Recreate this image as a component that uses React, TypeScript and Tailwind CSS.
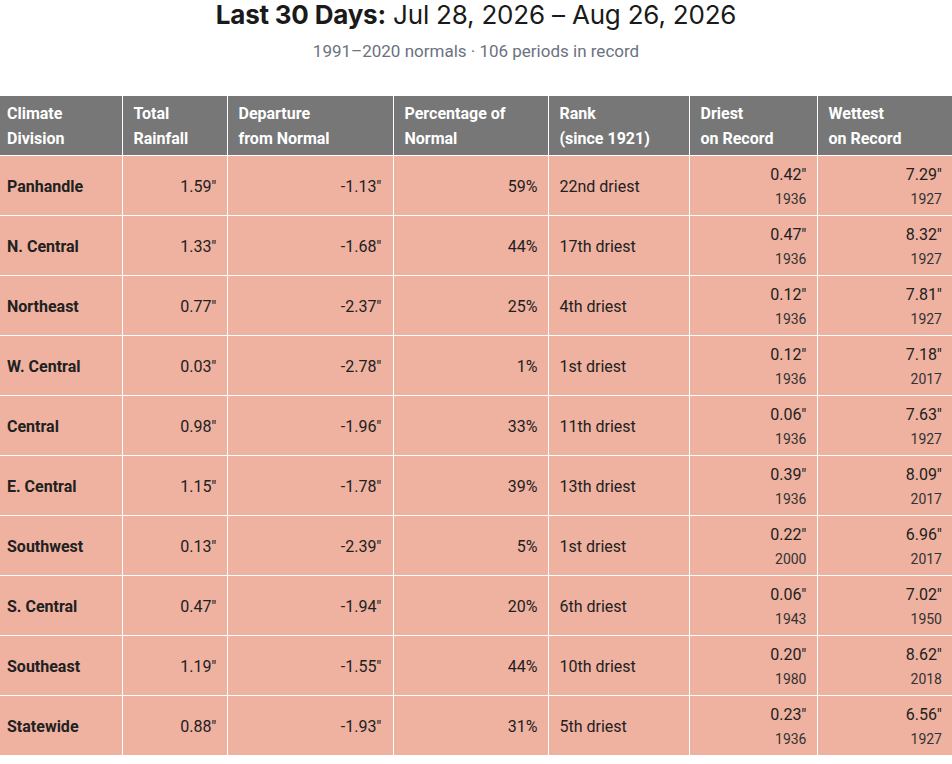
const rows = [
  { name: "Panhandle", total: '1.59"', dep: '-1.13"', pct: "59%", rank: "22nd driest", dry: '0.42"', dryYr: "1936", wet: '7.29"', wetYr: "1927" },
  { name: "N. Central", total: '1.33"', dep: '-1.68"', pct: "44%", rank: "17th driest", dry: '0.47"', dryYr: "1936", wet: '8.32"', wetYr: "1927" },
  { name: "Northeast", total: '0.77"', dep: '-2.37"', pct: "25%", rank: "4th driest", dry: '0.12"', dryYr: "1936", wet: '7.81"', wetYr: "1927" },
  { name: "W. Central", total: '0.03"', dep: '-2.78"', pct: "1%", rank: "1st driest", dry: '0.12"', dryYr: "1936", wet: '7.18"', wetYr: "2017" },
  { name: "Central", total: '0.98"', dep: '-1.96"', pct: "33%", rank: "11th driest", dry: '0.06"', dryYr: "1936", wet: '7.63"', wetYr: "1927" },
  { name: "E. Central", total: '1.15"', dep: '-1.78"', pct: "39%", rank: "13th driest", dry: '0.39"', dryYr: "1936", wet: '8.09"', wetYr: "2017" },
  { name: "Southwest", total: '0.13"', dep: '-2.39"', pct: "5%", rank: "1st driest", dry: '0.22"', dryYr: "2000", wet: '6.96"', wetYr: "2017" },
  { name: "S. Central", total: '0.47"', dep: '-1.94"', pct: "20%", rank: "6th driest", dry: '0.06"', dryYr: "1943", wet: '7.02"', wetYr: "1950" },
  { name: "Southeast", total: '1.19"', dep: '-1.55"', pct: "44%", rank: "10th driest", dry: '0.20"', dryYr: "1980", wet: '8.62"', wetYr: "2018" },
  { name: "Statewide", total: '0.88"', dep: '-1.93"', pct: "31%", rank: "5th driest", dry: '0.23"', dryYr: "1936", wet: '6.56"', wetYr: "1927" },
];

const headers = [
  ["Climate", "Division"],
  ["Total", "Rainfall"],
  ["Departure", "from Normal"],
  ["Percentage of", "Normal"],
  ["Rank", "(since 1921)"],
  ["Driest", "on Record"],
  ["Wettest", "on Record"],
];

const widths = ["w-[122px]", "w-[105px]", "w-[166px]", "w-[155px]", "w-[141px]", "w-[128px]", "w-[135px]"];

export default function App() {
  return (
    <div className="w-[952px] bg-white font-['Roboto',sans-serif] text-[#212121]">
      <div className="text-center">
        <h1 className="text-[26px] leading-[30px] text-[#1a1a1a] font-['Inter',sans-serif] tracking-[-0.2px]">
          <span className="font-bold">Last 30 Days:</span> Jul 28, 2026 – Aug 26, 2026
        </h1>
        <p className="mt-[9px] text-[17px] leading-[24px] text-[#6b7280]">1991–2020 normals · 106 periods in record</p>
      </div>

      <table className="mt-[33px] w-[952px] table-fixed border-collapse">
        <colgroup>
          {widths.map((w, i) => (
            <col key={i} className={w} />
          ))}
        </colgroup>
        <thead>
          <tr className="bg-[#777777]">
            {headers.map((h, i) => (
              <th
                key={i}
                className={`border border-white border-t-0 pt-[5px] pb-[4px] text-left align-top text-[16px] font-bold leading-[25px] text-white ${i === 0 ? "border-l-0 pl-[7px] pr-[10px]" : "pl-[11px] pr-[9px]"} ${i === 6 ? "border-r-0" : ""}`}
              >
                {h[0]}
                <br />
                {h[1]}
              </th>
            ))}
          </tr>
        </thead>
        <tbody>
          {rows.map((r) => (
            <tr key={r.name} className="bg-[#efb1a0] h-[60px]">
              <td className="border border-white border-l-0 pl-[7px] pr-[6px] pt-[2px] font-bold text-[16px]">{r.name}</td>
              <td className="border border-white px-[10px] pt-[2px] text-right text-[16px]">{r.total}</td>
              <td className="border border-white px-[11px] pt-[2px] text-right text-[16px]">{r.dep}</td>
              <td className="border border-white px-[10px] pt-[2px] text-right text-[16px]">{r.pct}</td>
              <td className="border border-white px-[11px] pt-[2px] text-left text-[16px]">{r.rank}</td>
              <td className="border border-white px-[10px] pt-[6px] pb-[4px] text-right">
                <div className="text-[16px] leading-[24px]">{r.dry}</div>
                <div className="text-[14px] leading-[24px] text-[#333333]">{r.dryYr}</div>
              </td>
              <td className="border border-white border-r-0 px-[10px] pt-[6px] pb-[4px] text-right">
                <div className="text-[16px] leading-[24px]">{r.wet}</div>
                <div className="text-[14px] leading-[24px] text-[#333333]">{r.wetYr}</div>
              </td>
            </tr>
          ))}
        </tbody>
      </table>
    </div>
  );
}
